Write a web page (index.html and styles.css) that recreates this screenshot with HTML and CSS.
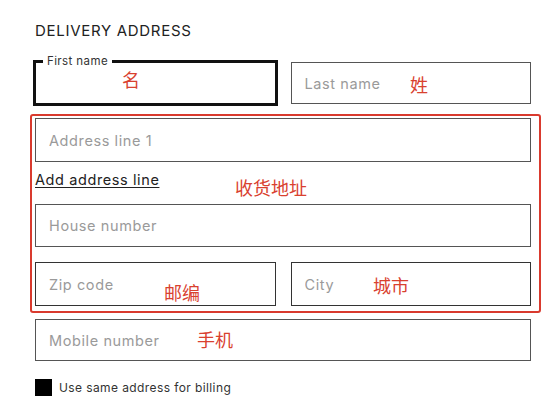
FILE: index.html
```html
<!DOCTYPE html>
<html lang="en">
<head>
    <meta charset="UTF-8">
    <meta name="viewport" content="width=device-width, initial-scale=1.0">
    <title>Delivery Address</title>
    <link rel="stylesheet" href="styles.css">
</head>
<body>
    <div class="delivery">
        <h2 class="delivery-title">DELIVERY ADDRESS</h2>
        <form class="delivery-form">
            <div class="row two">
                <div class="field focused">
                    <label class="float-label" for="first-name">First name</label>
                    <input type="text" id="first-name">
                </div>
                <div class="field">
                    <input type="text" id="last-name" placeholder="Last name">
                </div>
            </div>
            <div class="row addr">
                <input type="text" id="address-1" placeholder="Address line 1">
            </div>
            <a href="#" class="add-line">Add address line</a>
            <div class="row house">
                <input type="text" id="house-number" placeholder="House number">
            </div>
            <div class="row two zip">
                <input type="text" id="zip" placeholder="Zip code">
                <input type="text" id="city" placeholder="City">
            </div>
            <div class="row mobile">
                <input type="text" id="mobile" placeholder="Mobile number">
            </div>
            <label class="billing">
                <span class="box"></span>
                Use same address for billing
            </label>
        </form>

        <!-- annotations drawn over the form -->
        <div class="note-frame"></div>
        <span class="note n-first">名</span>
        <span class="note n-last">姓</span>
        <span class="note n-addr">收货地址</span>
        <span class="note n-zip">邮编</span>
        <span class="note n-city">城市</span>
        <span class="note n-mobile">手机</span>
    </div>
</body>
</html>
```

FILE: styles.css
```css
body {
    font-family: Inter, 'Liberation Sans', Arial, sans-serif;
    background: #fff;
    color: #222;
    margin: 0;
    padding: 0;
}
.delivery {
    position: relative;
    width: 554px;
    height: 420px;
    padding: 21px 0 0 35px;
    box-sizing: border-box;
}
.delivery-title {
    margin: 0;
    font-size: 15px;
    font-weight: 400;
    line-height: 20px;
    letter-spacing: 0.7px;
    color: #222;
}
.delivery-form {
    width: 496px;
    margin-top: 21px;
    display: flex;
    flex-direction: column;
    letter-spacing: 0.5px;
}
.row.two {
    display: grid;
    grid-template-columns: 1fr 1fr;
    gap: 15px;
}
.field { position: relative; }
.delivery-form input[type="text"] {
    width: 100%;
    height: 44px;
    box-sizing: border-box;
    border: 1px solid #555;
    border-radius: 0;
    padding: 0 13px;
    font-family: inherit;
    font-size: 14.5px;
    letter-spacing: 0.6px;
    color: #222;
    background: #fff;
    outline: none;
}
.delivery-form input::placeholder { color: #9a9a9a; }
.row:first-child input { height: 42px; }
.field.focused input {
    border-color: #111;
    outline: 2px solid #111;
}
.float-label {
    position: absolute;
    left: 8px;
    top: -7px;
    padding: 0 4px;
    background: #fff;
    font-size: 11.5px;
    line-height: 12px;
    letter-spacing: 0.4px;
    color: #333;
    z-index: 1;
}
.row.addr { margin-top: 14px; }
.add-line {
    margin-top: 8px;
    align-self: flex-start;
    font-size: 14.5px;
    line-height: 20px;
    letter-spacing: 0.6px;
    color: #222;
    text-decoration: underline;
    text-underline-offset: 2px;
}
.row.house { margin-top: 14px; }
.row.house input { height: 43px; }
.row.zip { margin-top: 15px; }
.row.zip input { border-color: #333; }
.row.mobile { margin-top: 13px; }
.row.mobile input { height: 42px; }
.billing {
    margin-top: 18px;
    display: flex;
    align-items: center;
    gap: 7px;
    font-size: 12px;
    line-height: 17px;
    letter-spacing: 0.4px;
    color: #333;
}
.billing .box {
    width: 17px;
    height: 17px;
    background: #000;
}

.note-frame {
    position: absolute;
    left: 30px;
    top: 114px;
    width: 511px;
    height: 199px;
    box-sizing: border-box;
    border: 2px solid #d93a2e;
    border-radius: 3px;
}
.note {
    position: absolute;
    font-family: 'Noto Sans CJK SC', sans-serif;
    font-size: 18px;
    line-height: 18px;
    letter-spacing: 0;
    color: #d9412f;
}
.n-first { left: 122px; top: 70px; }
.n-last { left: 410px; top: 75px; }
.n-addr { left: 235px; top: 178px; }
.n-zip { left: 164px; top: 283px; }
.n-city { left: 373px; top: 276px; }
.n-mobile { left: 197px; top: 330px; }
```
